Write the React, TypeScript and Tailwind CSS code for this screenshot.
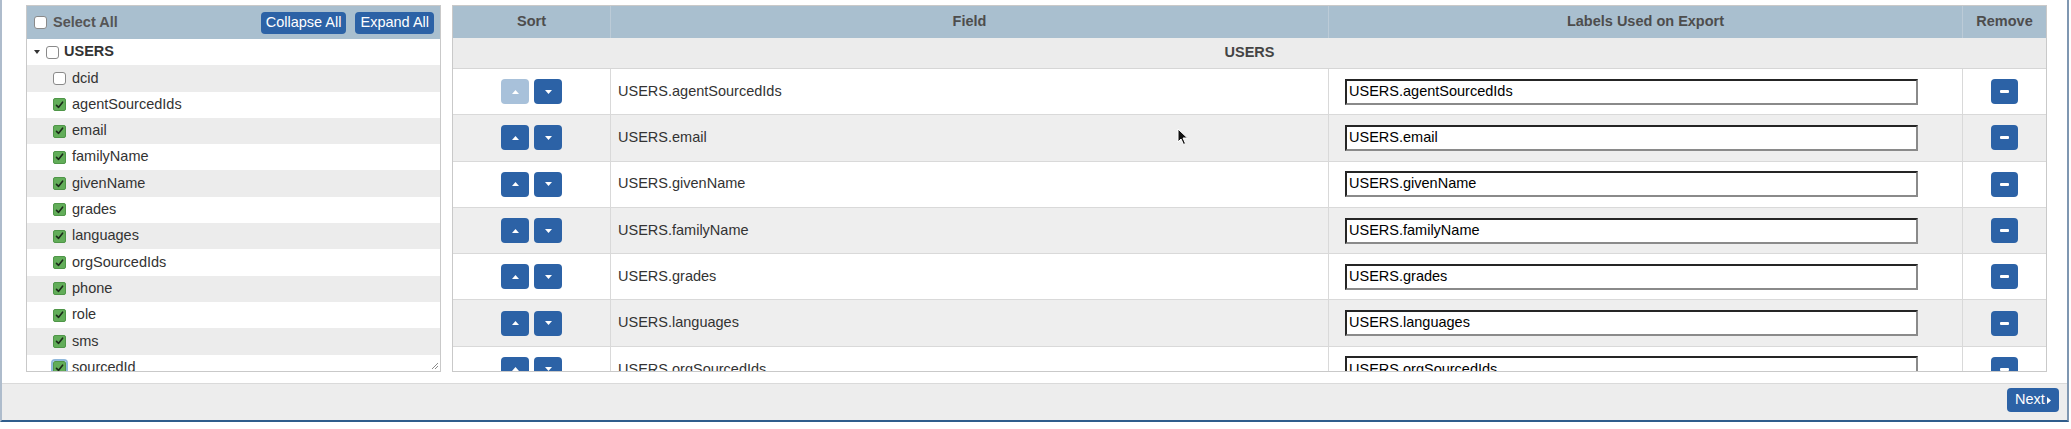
import React from 'react';

const treeFields = [
  'dcid',
  'agentSourcedIds',
  'email',
  'familyName',
  'givenName',
  'grades',
  'languages',
  'orgSourcedIds',
  'phone',
  'role',
  'sms',
  'sourcedId',
];

const exportRows = [
  'agentSourcedIds',
  'email',
  'givenName',
  'familyName',
  'grades',
  'languages',
  'orgSourcedIds',
];

const Checkbox = ({ checked, focus }: { checked?: boolean; focus?: boolean }) => {
  if (!checked) {
    return <span className="inline-block w-[13px] h-[13px] rounded-[3px] border border-[#8a8a8a] bg-white shrink-0" />;
  }
  return (
    <span
      className={`inline-flex items-center justify-center w-[13px] h-[13px] rounded-[2px] bg-[#62ad59] border border-[#4f9648] shrink-0 ${
        focus ? 'outline outline-2 outline-[#8fb8dc]' : ''
      }`}
    >
      <svg width="9" height="8" viewBox="0 0 9 8">
        <path d="M1.5 4.3 L3.6 6.3 L7.6 1.2" fill="none" stroke="#1b2a1a" strokeWidth="1.6" strokeLinecap="round" strokeLinejoin="round" />
      </svg>
    </span>
  );
};

const Caret = ({ up }: { up?: boolean }) => (
  <svg width="7" height="4" viewBox="0 0 7 4">
    <path d={up ? 'M0 4 L3.5 0 L7 4 Z' : 'M0 0 L3.5 4 L7 0 Z'} fill="white" />
  </svg>
);

const LeftPanel = () => {
  return (
    <div className="relative w-[415px] h-[367px] border border-[#c9c9c9] bg-white overflow-hidden shrink-0">
      <div className="h-[33px] bg-[#a9bfcf] flex items-center pl-[7px] pr-[6px]">
        <Checkbox />
        <span className="ml-[6px] text-[14.5px] font-bold text-[#555]">Select All</span>
        <div className="ml-auto flex gap-[9px]">
          <button className="h-[22px] px-[5px] rounded-[4px] bg-[#2c62a6] text-white text-[14.5px] leading-none">
            Collapse All
          </button>
          <button className="h-[22px] px-[5px] rounded-[4px] bg-[#2c62a6] text-white text-[14.5px] leading-none">
            Expand All
          </button>
        </div>
      </div>
      <div className="h-[26.3px] flex items-center pl-[7px]">
        <svg width="6" height="4" viewBox="0 0 6 4" className="mr-[6px]">
          <path d="M0 0 L3 4 L6 0 Z" fill="#333" />
        </svg>
        <Checkbox />
        <span className="ml-[5px] text-[14.5px] font-bold text-[#333]">USERS</span>
      </div>
      {treeFields.map((f, i) => (
        <div
          key={f}
          className={`h-[26.3px] flex items-center pl-[26px] ${i % 2 === 0 ? 'bg-[#ececec]' : 'bg-white'}`}
        >
          <Checkbox checked={f !== 'dcid'} focus={f === 'sourcedId'} />
          <span className="ml-[6px] text-[14.5px] text-[#333]">{f}</span>
        </div>
      ))}
      <svg width="9" height="9" viewBox="0 0 9 9" className="absolute right-[1px] bottom-[1px]">
        <path d="M8 2 L2 8 M8 5 L5 8" stroke="#8c8c8c" strokeWidth="1" />
      </svg>
    </div>
  );
};

const cols = 'grid grid-cols-[158px_718px_634px_83px]';

const RightPanel = () => {
  return (
    <div className="w-[1595px] h-[367px] border border-[#c9c9c9] bg-white overflow-hidden shrink-0">
      <div className={`${cols} h-[32px] bg-[#a9bfcf] text-[14.5px] font-bold text-[#4d4d4d]`}>
        <div className="flex items-center justify-center border-r border-[#bccbd7]">Sort</div>
        <div className="flex items-center justify-center border-r border-[#bccbd7]">Field</div>
        <div className="flex items-center justify-center border-r border-[#bccbd7]">Labels Used on Export</div>
        <div className="flex items-center justify-center">Remove</div>
      </div>
      <div className="h-[31px] bg-[#ececec] border-b border-[#d6d6d6] flex items-center justify-center text-[14.5px] font-bold text-[#444]">
        USERS
      </div>
      {exportRows.map((f, i) => (
        <div
          key={f}
          className={`${cols} h-[46.3px] border-b border-[#d9d9d9] ${i % 2 === 1 ? 'bg-[#eeeeee]' : 'bg-white'}`}
        >
          <div className="flex items-center justify-center gap-[5px] border-r border-[#d9d9d9]">
            <button
              className={`w-[28px] h-[25px] rounded-[4px] flex items-center justify-center ${
                i === 0 ? 'bg-[#a8c1da]' : 'bg-[#2c62a6]'
              }`}
            >
              <Caret up />
            </button>
            <button className="w-[28px] h-[25px] rounded-[4px] bg-[#2c62a6] flex items-center justify-center">
              <Caret />
            </button>
          </div>
          <div className="flex items-center pl-[7px] text-[14.5px] text-[#333] border-r border-[#d9d9d9]">
            USERS.{f}
          </div>
          <div className="flex items-center pl-[16px] border-r border-[#d9d9d9]">
            <div className="w-[573px] h-[26px] bg-white border-2 border-t-[#252525] border-l-[#252525] border-b-[#8a8a8a] border-r-[#8a8a8a] flex items-center pl-[2px] text-[14.5px] text-black">
              USERS.{f}
            </div>
          </div>
          <div className="flex items-center justify-center">
            <button className="w-[27px] h-[25px] rounded-[4px] bg-[#2c62a6] flex items-center justify-center">
              <span className="block w-[9px] h-[3px] rounded-[1px] bg-white" />
            </button>
          </div>
        </div>
      ))}
    </div>
  );
};

export default function App() {
  return (
    <div className="relative w-[2071px] h-[429px] bg-white font-['Liberation_Sans',Arial,sans-serif]">
      <div className="w-[2069px] h-[422px] border-x-2 border-l-[#aebccc] border-r-[#7f97b1] border-b-2 border-b-[#2f5d8c] flex flex-col">
        <div className="flex gap-[11px] pl-[24px] pt-[5px]">
          <LeftPanel />
          <RightPanel />
        </div>
        <div className="mt-[11px] flex-1 bg-[#ededed] border-t border-[#dadada] flex items-start justify-end pr-[8px] pt-[4px]">
          <button className="h-[24px] w-[52px] rounded-[4px] bg-[#2c62a6] text-white text-[14.5px] flex items-center justify-center gap-[2px]">
            Next
            <svg width="4" height="7" viewBox="0 0 4 7">
              <path d="M0 0 L4 3.5 L0 7 Z" fill="white" />
            </svg>
          </button>
        </div>
      </div>
      <svg width="12" height="18" viewBox="0 0 12 18" className="absolute left-[1177px] top-[128px]">
        <path d="M1 1 L1 14 L4 11 L6.5 16.5 L8.5 15.5 L6 10 L10.5 10 Z" fill="#111" stroke="white" strokeWidth="1" strokeLinejoin="round" />
      </svg>
    </div>
  );
}
